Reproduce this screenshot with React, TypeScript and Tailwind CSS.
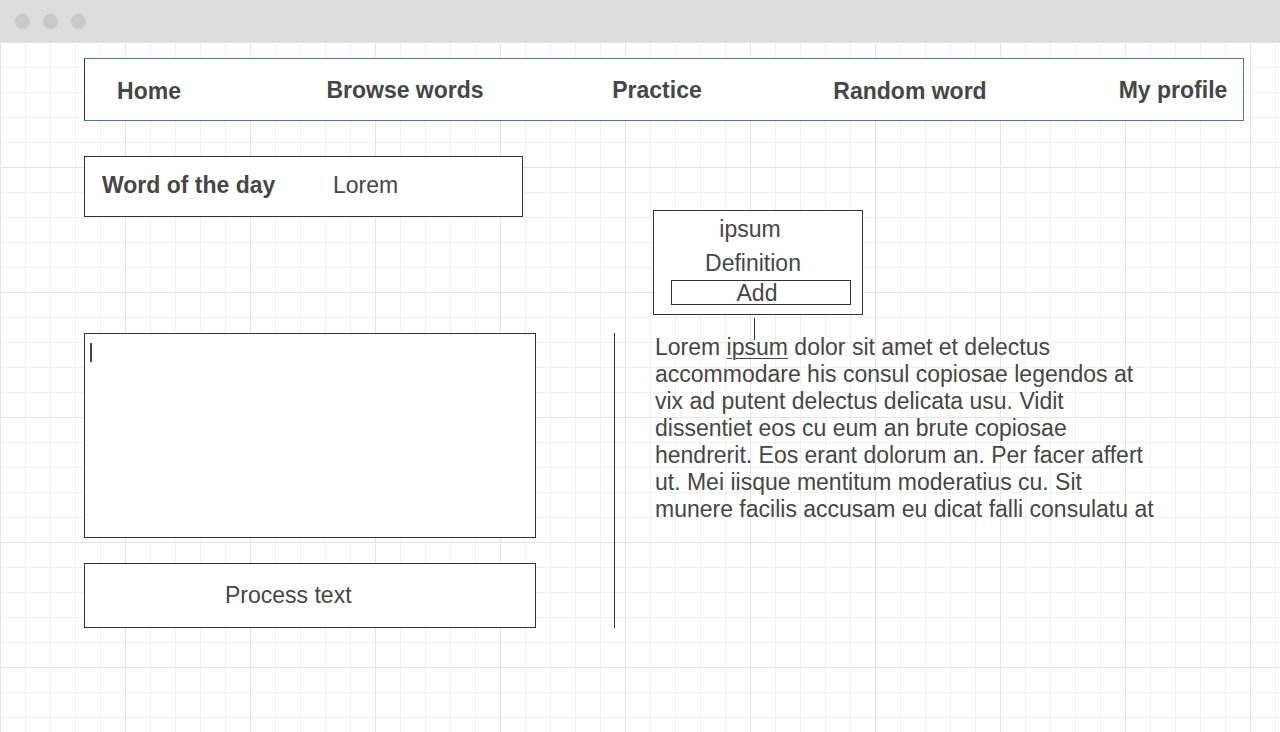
import React from "react";

export default function App() {
  const navItems = ["Home", "Browse words", "Practice", "Random word", "My profile"];
  return (
    <div className="w-[1280px] h-[732px] overflow-hidden bg-white font-['Liberation_Sans',Arial,sans-serif] text-[#464646]">
      <div className="h-[42px] bg-[#dddddd] flex items-center pl-[15px] gap-[13px]">
        <div className="w-[15px] h-[15px] rounded-full bg-[#c9c9c9]" />
        <div className="w-[15px] h-[15px] rounded-full bg-[#c9c9c9]" />
        <div className="w-[15px] h-[15px] rounded-full bg-[#c9c9c9]" />
      </div>
      <div className="h-[690px] pt-[16px] pl-[84px] bg-white bg-[image:linear-gradient(to_right,#e4e4e4_1px,transparent_1px),linear-gradient(to_bottom,#e4e4e4_1px,transparent_1px),linear-gradient(to_right,#f0f0f0_1px,transparent_1px),linear-gradient(to_bottom,#f0f0f0_1px,transparent_1px)] bg-[size:125px_125px,125px_125px,25px_25px,25px_25px]">
        <nav className="w-[1160px] h-[63px] bg-white border border-[#4472c4] border-l-[#333333] grid grid-cols-[128px_384px_120px_386px_140px] items-center text-[23px] font-bold">
          {navItems.map((n, i) => (
            <div key={n} className={"text-center whitespace-nowrap " + (i === 0 || i === 3 ? "mt-[3px]" : "mt-[1px]")}>
              {n}
            </div>
          ))}
        </nav>
        <div className="flex mt-[35px]">
          <div className="w-[452px] flex flex-col">
            <div className="w-[439px] h-[61px] bg-white border border-[#333333] flex items-center pl-[17px] pb-[2px] text-[23px]">
              <span className="font-bold w-[231px] whitespace-nowrap">Word of the day</span>
              <span>Lorem</span>
            </div>
            <div className="mt-[116px] h-[205px] bg-white border border-[#333333] pl-[5px] pt-[9px]">
              <div className="w-[2px] h-[19px] bg-[#444444]" />
            </div>
            <div className="mt-[25px] h-[65px] bg-white border border-[#333333] flex items-center pl-[140px] text-[23px]">
              Process text
            </div>
          </div>
          <div className="ml-[78px] mt-[177px] w-px h-[295px] bg-[#333333]" />
          <div className="ml-[40px] mt-[177px] relative">
            <p className="pt-[1px] text-[23px] leading-[27px] whitespace-nowrap">
              Lorem <span className="underline underline-offset-[3px] decoration-1">ipsum</span> dolor sit amet et delectus
              <br />
              accommodare his consul copiosae legendos at
              <br />
              vix ad putent delectus delicata usu. Vidit
              <br />
              dissentiet eos cu eum an brute copiosae
              <br />
              hendrerit. Eos erant dolorum an. Per facer affert
              <br />
              ut. Mei iisque mentitum moderatius cu. Sit
              <br />
              munere facilis accusam eu dicat falli consulatu at
            </p>
            <div className="absolute left-[99px] top-[-15px] w-px h-[22px] bg-[#333333]" />
            <div className="absolute left-[-2px] top-[-123px] w-[210px] h-[105px] bg-white border border-[#333333] flex flex-col text-[23px]">
              <div className="mt-[5px] h-[27px] leading-[27px] text-center pr-[16px]">ipsum</div>
              <div className="mt-[7px] h-[27px] leading-[27px] text-center pr-[10px]">Definition</div>
              <div className="mt-[3px] ml-[17px] w-[180px] h-[25px] border border-[#333333] flex items-center justify-center pr-[8px] pt-[2px] leading-[25px]">
                Add
              </div>
            </div>
          </div>
        </div>
      </div>
    </div>
  );
}
